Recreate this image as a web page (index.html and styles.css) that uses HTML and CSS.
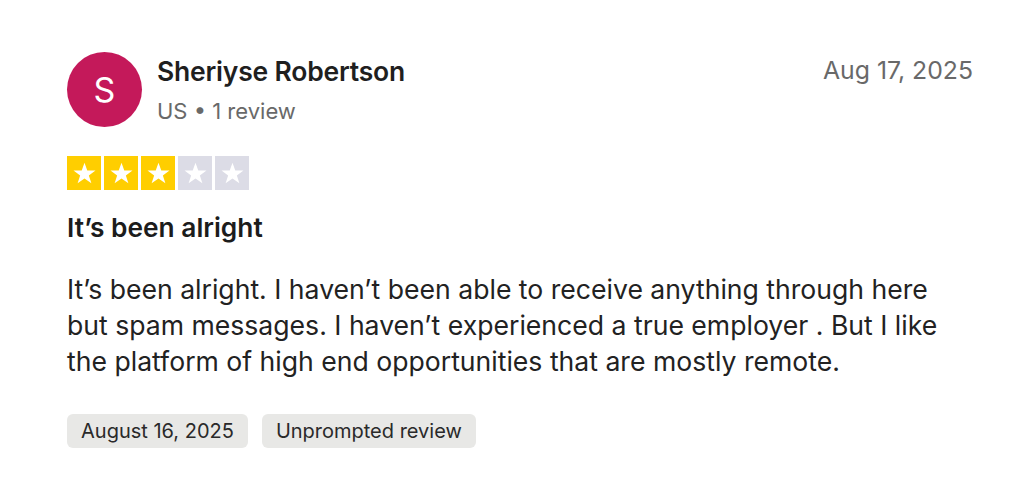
FILE: index.html
```html
<!DOCTYPE html>
<html lang="en">
<head>
<meta charset="utf-8">
<link rel="stylesheet" href="styles.css">
</head>
<body>
<article class="review">
  <header class="head">
    <div class="avatar">S</div>
    <div class="who">
      <div class="name">Sheriyse Robertson</div>
      <div class="meta">US • 1 review</div>
    </div>
    <div class="date">Aug 17, 2025</div>
  </header>
  <div class="stars">
    <span class="star on"><svg viewBox="0 0 24 24"><path d="M12 3.2l2.3 6.4h6.8l-5.5 4 2.1 6.5L12 16.1l-5.7 4 2.1-6.5-5.5-4h6.8z"/></svg></span>
    <span class="star on"><svg viewBox="0 0 24 24"><path d="M12 3.2l2.3 6.4h6.8l-5.5 4 2.1 6.5L12 16.1l-5.7 4 2.1-6.5-5.5-4h6.8z"/></svg></span>
    <span class="star on"><svg viewBox="0 0 24 24"><path d="M12 3.2l2.3 6.4h6.8l-5.5 4 2.1 6.5L12 16.1l-5.7 4 2.1-6.5-5.5-4h6.8z"/></svg></span>
    <span class="star"><svg viewBox="0 0 24 24"><path d="M12 3.2l2.3 6.4h6.8l-5.5 4 2.1 6.5L12 16.1l-5.7 4 2.1-6.5-5.5-4h6.8z"/></svg></span>
    <span class="star"><svg viewBox="0 0 24 24"><path d="M12 3.2l2.3 6.4h6.8l-5.5 4 2.1 6.5L12 16.1l-5.7 4 2.1-6.5-5.5-4h6.8z"/></svg></span>
  </div>
  <h2 class="title">It’s been alright</h2>
  <p class="body">It’s been alright. I haven’t been able to receive anything through here but spam messages. I haven’t experienced a true employer . But I like the platform of high end opportunities that are mostly remote.</p>
  <div class="tags">
    <span class="tag">August 16, 2025</span>
    <span class="tag">Unprompted review</span>
  </div>
</article>
</body>
</html>
```
FILE: styles.css
```css
html, body {
  margin: 0;
  padding: 0;
  background: #ffffff;
}
body {
  font-family: Inter, "Liberation Sans", Arial, sans-serif;
  color: #1c1c1c;
}
.review {
  padding: 52px 51px 0 67px;
}
.head {
  display: flex;
  align-items: flex-start;
}
.avatar {
  width: 75px;
  height: 75px;
  border-radius: 50%;
  background: #c4195a;
  color: #ffffff;
  display: flex;
  align-items: center;
  justify-content: center;
  font-size: 34px;
  font-weight: 400;
  flex: none;
}
.who {
  margin-left: 15px;
  flex: 1;
  padding-top: 3px;
}
.name {
  font-size: 26.5px;
  font-weight: 600;
  line-height: 32px;
  letter-spacing: -0.2px;
  color: #1f1f1f;
}
.meta {
  font-size: 22px;
  line-height: 26px;
  margin-top: 11px;
  color: #696969;
}
.date {
  font-size: 24.8px;
  line-height: 28px;
  padding-top: 4px;
  color: #696969;
}
.stars {
  display: flex;
  gap: 3px;
  margin-top: 29px;
}
.star {
  width: 34px;
  height: 34px;
  background: #dcdce6;
  display: flex;
  align-items: center;
  justify-content: center;
}
.star.on {
  background: #ffce00;
}
.star svg {
  width: 29px;
  height: 29px;
  fill: #ffffff;
}
.title {
  margin: 22px 0 0;
  font-size: 26.3px;
  font-weight: 600;
  line-height: 32px;
  color: #1c1c1c;
}
.body {
  margin: 27px 0 0;
  font-size: 26.6px;
  line-height: 36px;
  max-width: 890px;
  color: #222222;
}
.tags {
  display: flex;
  gap: 14px;
  margin-top: 35px;
}
.tag {
  background: #e8e8e6;
  border-radius: 6px;
  padding: 0 14px;
  height: 34px;
  display: flex;
  align-items: center;
  font-size: 20px;
  color: #2a2a2a;
}
```
